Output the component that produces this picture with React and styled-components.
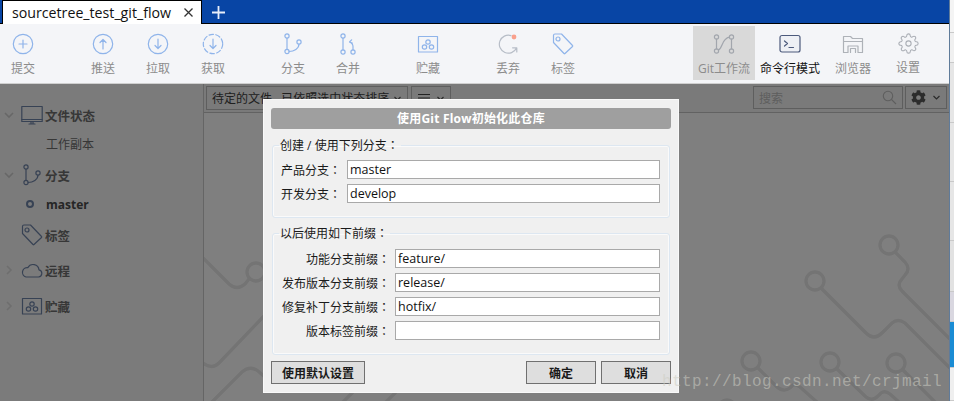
import styled, { createGlobalStyle } from "styled-components";
import { FiSettings } from "react-icons/fi";
import { FaCog } from "react-icons/fa";

const Global = createGlobalStyle`
  html, body { margin: 0; padding: 0; background: #fff; }
  body { font-family: "Open Sans", "Noto Sans CJK SC", sans-serif; font-size: 12px; }
`;

const CJK = `"Open Sans", "Noto Sans CJK SC", sans-serif`;

const Page = styled.div`
  position: relative;
  width: 954px;
  height: 401px;
  overflow: hidden;
  display: flex;
`;
const Win = styled.div`
  width: 949px;
  display: flex;
  flex-direction: column;
`;
const Strip = styled.div`
  width: 5px;
  border-left: 1px solid #5f7b9a;
  box-sizing: border-box;
  display: flex;
  flex-direction: column;
`;
const StripPart = styled.div`
  height: ${p => p.$h}px;
  background: ${p => p.$bg};
  border-bottom: 1px solid #c9c9c9;
  box-sizing: border-box;
`;

const TabBar = styled.div`
  height: 24px;
  box-sizing: border-box;
  background: #0845a5;
  border-bottom: 1px solid #000;
  display: flex;
  align-items: flex-start;
`;
const Tab = styled.div`
  margin-left: 2px;
  width: 200px;
  height: 24px;
  box-sizing: border-box;
  background: #fff;
  border: 1px solid #000;
  border-bottom: 0;
  display: flex;
  align-items: center;
  justify-content: space-between;
  padding: 0 7px 1px 9px;
  font-size: 14.2px;
  color: #111;
`;
const AddTab = styled.div`
  margin: 5px 0 0 9px;
  display: flex;
`;

const Toolbar = styled.div`
  height: 60px;
  box-sizing: border-box;
  background: #f4f5f8;
  border-bottom: 1px solid #cfcfcf;
  display: flex;
  padding-top: 2px;
`;
const Tool = styled.div`
  width: ${p => p.$w || 46}px;
  margin-left: ${p => p.$ml || 0}px;
  height: 54px;
  background: ${p => (p.$active ? "#d9d9d9" : "transparent")};
  color: ${p => (p.$dark ? "#111" : "#8c8c8c")};
  display: flex;
  flex-direction: column;
  align-items: center;
  padding-top: 7px;
  box-sizing: border-box;
  white-space: nowrap;
  svg { display: block; }
`;
const ToolLabel = styled.div`
  margin-top: 5px;
  font-size: 12px;
  line-height: 17px;
`;

const Main = styled.div`
  position: relative;
  flex: 1;
  display: flex;
  min-height: 0;
`;
const Scrim = styled.div`
  position: absolute;
  inset: 0;
  background: rgba(0, 0, 0, 0.5);
`;

const Sidebar = styled.div`
  width: 204px;
  box-sizing: border-box;
  background: #f6f6f6;
  border-right: 1px solid #cbcbcb;
  padding-top: 19px;
  display: flex;
  flex-direction: column;
  color: #6e6e6e;
`;
const SideRow = styled.div`
  height: 24px;
  margin-top: ${p => p.$mt || 0}px;
  display: flex;
  align-items: center;
  font-size: 12.5px;
  font-weight: 700;
`;
const Caret = styled.div`
  width: 21px;
  padding-left: 3px;
  box-sizing: border-box;
  display: flex;
  color: ${p => (p.$open ? "#cfcfcf" : "#dcdcdc")};
`;
const SideIcon = styled.div`
  width: 24px;
  display: flex;
  color: #6f84a8;
`;
const SubRow = styled(SideRow)`
  padding-left: 46px;
  position: relative;
  font-size: 12px;
  font-weight: ${p => (p.$bold ? 700 : 400)};
  color: ${p => (p.$bold ? "#4c4c4c" : "#6e6e6e")};
`;
const Dot = styled.span`
  position: absolute;
  left: 25.5px;
  top: 8px;
  width: 8px;
  height: 8px;
  box-sizing: border-box;
  border: 2px solid #6f84a8;
  border-radius: 50%;
`;

const Content = styled.div`
  flex: 1;
  display: flex;
  flex-direction: column;
  min-width: 0;
`;
const FilterBar = styled.div`
  height: 29px;
  box-sizing: border-box;
  background: #f4f4f4;
  border-bottom: 1px solid #c4c4c4;
  display: flex;
  padding: 2px 2px 0 2px;
`;
const Box = styled.div`
  width: ${p => p.$w}px;
  height: ${p => p.$h || 24}px;
  margin-left: ${p => p.$ml || 0}px;
  box-sizing: border-box;
  border: 1px solid #bcbcbc;
  display: flex;
  align-items: center;
  justify-content: space-between;
  padding: 0 5px;
  color: #404040;
  font-size: 12px;
  white-space: pre;
  overflow: hidden;
`;
const Hint = styled.span`
  color: #bdbdbd;
`;
const Board = styled.div`
  flex: 1;
  background: #fff;
  position: relative;
  overflow: hidden;
  svg { position: absolute; left: 0; top: 0; }
`;

const Dialog = styled.div`
  position: absolute;
  left: 263px;
  top: 15px;
  width: 416px;
  height: 294px;
  box-sizing: border-box;
  background: #f0f0f0;
  border: 1px solid #f9f9f9;
  padding: 8px 7px 0;
  display: flex;
  flex-direction: column;
  font-family: ${CJK};
  color: #1a1a1a;
`;
const DialogTitle = styled.div`
  height: 21px;
  flex: none;
  background: #9f9f9f;
  border-radius: 3px;
  color: #fff;
  font-weight: 700;
  font-size: 12px;
  letter-spacing: 0.2px;
  line-height: 21px;
  text-align: center;
`;
const Group = styled.fieldset`
  margin: ${p => p.$mt}px 1px 0;
  padding: ${p => p.$pt}px 9px 14px 8px;
  border: 1px solid #dde7f1;
  box-shadow: inset 0 0 0 1px #fafafa;
  border-radius: 3px;
  min-width: 0;
  display: flex;
  flex-direction: column;
  gap: 5px;
`;
const Legend = styled.legend`
  margin-left: -2px;
  padding: 0 2px 0 1px;
  height: 16px;
  font-size: 12px;
  line-height: 16px;
`;
// the colon sits in the middle of its box in the reference, as in the TC cut
const Colon = styled.span`
  font-family: "Noto Sans CJK TC", sans-serif;
`;
const Field = styled.label`
  display: grid;
  grid-template-columns: ${p => p.$label}px 1fr;
  align-items: center;
`;
const FieldName = styled.span`
  text-align: ${p => (p.$right ? "right" : "left")};
  padding-right: ${p => (p.$right ? 5 : 0)}px;
  font-size: 12px;
  white-space: nowrap;
`;
const Input = styled.input`
  height: 19px;
  box-sizing: border-box;
  width: 100%;
  border: 1px solid #a9a9a9;
  background: #fff;
  padding: 0 2px;
  margin: 0;
  outline: 0;
  font-family: ${CJK};
  font-size: 12.5px;
  color: #111;
`;
const Actions = styled.div`
  margin-top: 6px;
  display: flex;
  gap: 5px;
`;
const Button = styled.button`
  width: ${p => p.$w}px;
  height: 23px;
  margin: 0;
  margin-right: ${p => (p.$push ? "auto" : 0)};
  padding: 0;
  box-sizing: border-box;
  background: #dedede;
  border: 1px solid #707070;
  border-radius: 0;
  font-family: ${CJK};
  font-size: 12px;
  font-weight: 700;
  color: #1a1a1a;
`;
const Watermark = styled.div`
  position: absolute;
  left: 662px;
  top: 372px;
  font-family: "Liberation Mono", monospace;
  font-size: 16px;
  letter-spacing: 0.4px;
  line-height: 20px;
  color: rgba(205, 205, 195, 0.55);
  white-space: nowrap;
`;

const BLUE = "#8fb4ea";
const Ico = ({ children, color = BLUE, size = 22 }) => (
  <svg width={size} height={size} viewBox="0 0 22 22" fill="none" stroke={color} strokeWidth="1.2" strokeLinecap="round" strokeLinejoin="round">
    {children}
  </svg>
);

const BranchIcon = ({ color }) => (
  <Ico color={color}>
    <circle cx="5" cy="3" r="2.1" />
    <circle cx="5" cy="18.5" r="2.1" />
    <circle cx="17" cy="9" r="2.1" />
    <path d="M5 5.1V16.4M17 11.1C17 15.5 12 18.5 7.1 18.5" />
  </Ico>
);
const StashIcon = ({ color }) => (
  <Ico color={color}>
    <rect x="1.5" y="3.5" width="19" height="15.5" />
    <circle cx="11" cy="9" r="2.2" />
    <circle cx="7.5" cy="14" r="2.2" />
    <circle cx="14.5" cy="14" r="2.2" />
  </Ico>
);
const TagIcon = ({ color }) => (
  <Ico color={color}>
    <path d="M1.5 2.5Q1.5 1 3 1H9.5L20.5 12.5Q21 13 20.5 13.5L13 20.5Q12.5 21 12 20.5L1.5 9.5Z" />
    <circle cx="6" cy="6" r="2" />
  </Ico>
);

const tools = [
  { label: "提交", icon: <Ico><circle cx="11" cy="11" r="9.7" /><path d="M11 7V15M7 11H15" /></Ico> },
  { label: "推送", ml: 34, icon: <Ico><circle cx="11" cy="11" r="9.7" /><path d="M11 16V7M8 9.5L11 6.5L14 9.5" /></Ico> },
  { label: "拉取", ml: 9, icon: <Ico><circle cx="11" cy="11" r="9.7" /><path d="M11 6V15M8 12.5L11 15.5L14 12.5" /></Ico> },
  { label: "获取", ml: 9, icon: <Ico><circle cx="11" cy="11" r="9.7" strokeDasharray="4.5 2.4" /><path d="M11 6V15M8 12.5L11 15.5L14 12.5" /></Ico> },
  { label: "分支", ml: 34, icon: <BranchIcon color={BLUE} /> },
  {
    label: "合并", ml: 9,
    icon: (
      <Ico>
        <circle cx="6" cy="3" r="2.1" />
        <circle cx="6" cy="19" r="2.1" />
        <circle cx="16" cy="19" r="2.1" />
        <path d="M6 5.1V16.9M16 16.9V13.5Q16 10.5 12.5 9M12.5 9L14.6 6.8M12.5 9L15.3 10" />
      </Ico>
    ),
  },
  { label: "贮藏", ml: 34, icon: <StashIcon color={BLUE} /> },
  {
    label: "丢弃", ml: 34,
    icon: (
      <svg width="22" height="22" viewBox="0 0 22 22" fill="none" stroke="#b7bdc7" strokeWidth="1.2" strokeLinecap="round" strokeLinejoin="round">
        <path d="M14 2.6A9 9 0 1 0 19.5 15M19.8 19V14.8H15.6" />
        <circle cx="17" cy="4" r="2.4" fill="#f9a08c" stroke="none" />
      </svg>
    ),
  },
  { label: "标签", ml: 9, icon: <TagIcon color={BLUE} /> },
  {
    label: "Git工作流", ml: 107, w: 62, active: true,
    icon: (
      <Ico color="#a2a6ad">
        <circle cx="3.5" cy="4" r="2.1" />
        <circle cx="18.5" cy="4" r="2.1" />
        <circle cx="3.5" cy="18" r="2.1" />
        <circle cx="18.5" cy="18" r="2.1" />
        <path d="M3.5 6.1V15.9M18.5 6.1V15.9M5.4 17C10 15 8.5 5.5 16.4 4.2" />
      </Ico>
    ),
  },
  {
    label: "命令行模式", ml: 5, w: 60, dark: true,
    icon: (
      <Ico color="#4c5a7c">
        <rect x="1" y="2.5" width="20" height="16.5" rx="2" fill="#eef0f5" />
        <path d="M5.5 8L8.5 10.5L5.5 13M10 14.5H14.5" />
      </Ico>
    ),
  },
  {
    label: "浏览器", ml: 10,
    icon: (
      <Ico color="#aeb2b8">
        <path d="M1.5 19.5V3.5H8.5L10.5 5.5H20.5V19.5H16V13H6V19.5ZM1.5 8.5H20.5M8.5 19.5V15.5H13.5V19.5" />
      </Ico>
    ),
  },
  { label: "设置", ml: 9, icon: <FiSettings size={21} color="#a9adb4" strokeWidth={1.2} /> },
];

const Chevron = ({ open }) =>
  open ? (
    <svg width="12" height="12" viewBox="0 0 12 12" fill="none" stroke="currentColor" strokeWidth="1.6"><path d="M2 4L6 8L10 4" /></svg>
  ) : (
    <svg width="12" height="12" viewBox="0 0 12 12" fill="none" stroke="currentColor" strokeWidth="1.6"><path d="M4 2L8 6L4 10" /></svg>
  );

const MiniChevron = () => (
  <svg width="9" height="9" viewBox="0 0 9 9" fill="none" stroke="#555" strokeWidth="1.2"><path d="M1.5 3L4.5 6L7.5 3" /></svg>
);

function Circuit() {
  return (
    <svg width="745" height="288" viewBox="204 113 745 288" fill="none" stroke="#e8e8e8" strokeWidth="3.3">
      <circle cx="889" cy="245" r="9" />
      <path d="M895 252L905 262Q911 269 905 275L902 279Q896 285 902 291L950 339" />
      <circle cx="815" cy="281" r="9" />
      <path d="M821 288L866 333Q874 341 882 333L892 323Q898 318 905 323L950 368" />
      <circle cx="751" cy="361" r="9" />
      <path d="M758 368L776 386Q783 393 790 388L793 385Q796 384 800 387L818 403" />
      <circle cx="830" cy="362" r="9" />
      <path d="M837 369L866 397Q872 402 878 396L881 393Q885 390 890 394L900 403" />
      <circle cx="896" cy="363" r="9" />
      <path d="M903 370L936 403" />
      <circle cx="727" cy="409" r="9" />
      <circle cx="256" cy="272" r="9" />
      <path d="M203 258L229 284Q237 291 245 284L249 279" />
      <path d="M203 363Q212 370 219 363L265 315" />
      <path d="M212 402L242 372Q250 365 258 371L266 378" />
      <path d="M396 392L384 404M353 392L341 404" />
    </svg>
  );
}

const branchFields = [
  ["产品分支", "master"],
  ["开发分支", "develop"],
];
const prefixFields = [
  ["功能分支前缀", "feature/"],
  ["发布版本分支前缀", "release/"],
  ["修复补丁分支前缀", "hotfix/"],
  ["版本标签前缀", ""],
];

export default function App() {
  return (
    <Page>
      <Global />
      <Win>
        <TabBar>
          <Tab>
            <span>sourcetree_test_git_flow</span>
            <svg width="11" height="11" viewBox="0 0 11 11" stroke="#333" strokeWidth="1.3"><path d="M1.5 1.5L9.5 9.5M9.5 1.5L1.5 9.5" /></svg>
          </Tab>
          <AddTab>
            <svg width="15" height="15" viewBox="0 0 15 15" stroke="#e8eefa" strokeWidth="1.8"><path d="M7.5 1V14M1 7.5H14" /></svg>
          </AddTab>
        </TabBar>
        <Toolbar>
          {tools.map(t => (
            <Tool key={t.label} $w={t.w} $ml={t.ml} $active={t.active} $dark={t.dark}>
              {t.icon}
              <ToolLabel>{t.label}</ToolLabel>
            </Tool>
          ))}
        </Toolbar>
        <Main>
          <Sidebar>
            <SideRow>
              <Caret $open><Chevron open /></Caret>
              <SideIcon>
                <Ico color="#6f84a8">
                  <rect x="0.8" y="2.5" width="20.4" height="15" />
                  <path d="M0.8 15.5H21.2M8 20H14M10 17.5V20M12 17.5V20" />
                </Ico>
              </SideIcon>
              文件状态
            </SideRow>
            <SubRow $mt={5}>工作副本</SubRow>
            <SideRow $mt={7}>
              <Caret $open><Chevron open /></Caret>
              <SideIcon><BranchIcon color="#6f84a8" /></SideIcon>
              分支
            </SideRow>
            <SubRow $mt={5} $bold><Dot />master</SubRow>
            <SideRow $mt={7}>
              <Caret />
              <SideIcon><TagIcon color="#6f84a8" /></SideIcon>
              标签
            </SideRow>
            <SideRow $mt={11}>
              <Caret><Chevron /></Caret>
              <SideIcon>
                <Ico color="#6f84a8">
                  <path d="M5 18H17.5A3.6 3.6 0 0 0 18 10.9A6 6 0 0 0 6.8 8.6A4.8 4.8 0 0 0 5 18Z" />
                </Ico>
              </SideIcon>
              远程
            </SideRow>
            <SideRow $mt={12}>
              <Caret><Chevron /></Caret>
              <SideIcon><StashIcon color="#6f84a8" /></SideIcon>
              贮藏
            </SideRow>
          </Sidebar>
          <Content>
            <FilterBar>
              <Box $w={202}>
                <span>待定的文件,{"  "}已依照选中状态排序</span>
                <MiniChevron />
              </Box>
              <Box $w={40} $ml={3}>
                <svg width="14" height="10" viewBox="0 0 14 10" stroke="#444" strokeWidth="1"><path d="M1 1.5H13M1 5H13M1 8.5H13" /></svg>
                <MiniChevron />
              </Box>
              <Box $w={150} $h={23} $ml={302}>
                <Hint>搜索</Hint>
                <svg width="15" height="15" viewBox="0 0 15 15" fill="none" stroke="#bdbdbd" strokeWidth="1.1"><circle cx="6" cy="6" r="4.7" /><path d="M9.5 9.5L14 14" /></svg>
              </Box>
              <Box $w={42} $h={23} $ml={2}>
                <FaCog size={15} color="#585858" />
                <MiniChevron />
              </Box>
            </FilterBar>
            <Board><Circuit /></Board>
          </Content>
          <Scrim />
          <Dialog>
            <DialogTitle>使用Git Flow初始化此仓库</DialogTitle>
            <Group $mt={8} $pt={7}>
              <Legend>创建 / 使用下列分支<Colon>：</Colon></Legend>
              {branchFields.map(([name, value]) => (
                <Field key={name} $label={66}>
                  <FieldName>{name}<Colon>：</Colon></FieldName>
                  <Input readOnly value={value} />
                </Field>
              ))}
            </Group>
            <Group $mt={7} $pt={8}>
              <Legend>以后使用如下前缀<Colon>：</Colon></Legend>
              {prefixFields.map(([name, value]) => (
                <Field key={name} $label={114}>
                  <FieldName $right>{name}<Colon>：</Colon></FieldName>
                  <Input readOnly value={value} />
                </Field>
              ))}
            </Group>
            <Actions>
              <Button $w={94} $push>使用默认设置</Button>
              <Button $w={70}>确定</Button>
              <Button $w={70}>取消</Button>
            </Actions>
          </Dialog>
        </Main>
      </Win>
      <Strip>
        <StripPart $h={33} $bg="#f4f4f4" />
        <StripPart $h={30} $bg="#f0f0f0" />
        <StripPart $h={60} $bg="#e6e6e6" />
        <StripPart $h={59} $bg="#e6e6e6" />
        <StripPart $h={59} $bg="#e6e6e6" />
        <StripPart $h={51} $bg="#e2e2e2" />
        <StripPart $h={30} $bg="#d9d7e0" />
        <StripPart $h={46} $bg="#1a8cd4" />
        <StripPart $h={33} $bg="#efefef" />
      </Strip>
      <Watermark>http://blog.csdn.net/crjmail</Watermark>
    </Page>
  );
}
